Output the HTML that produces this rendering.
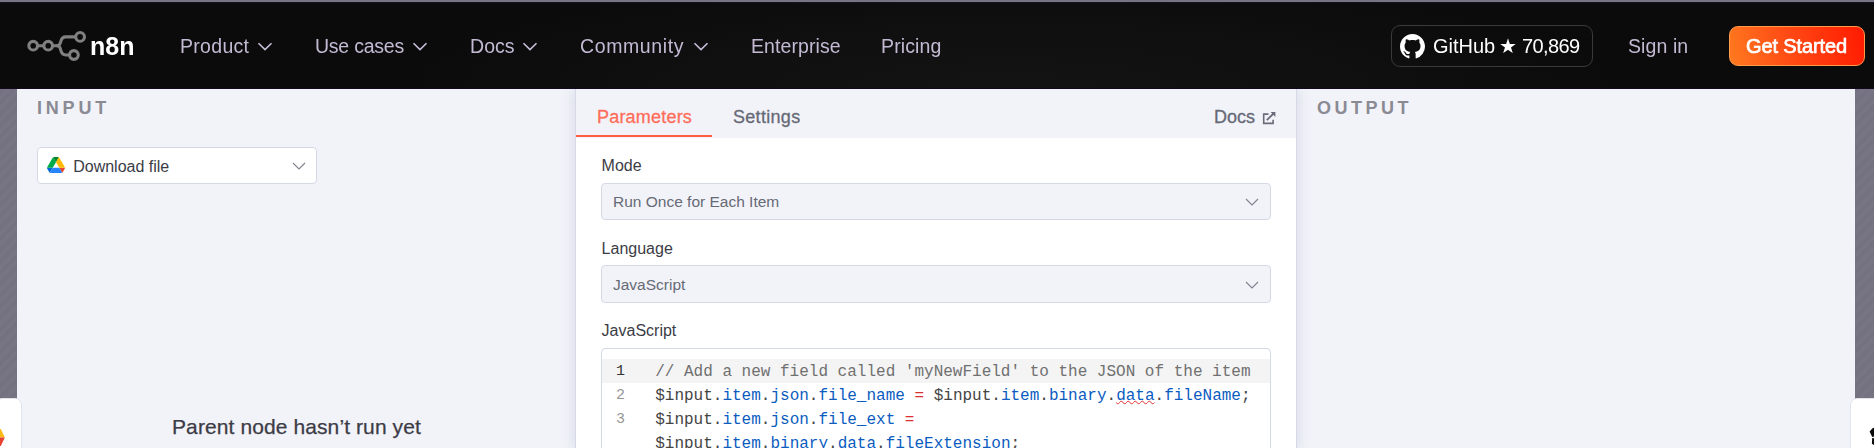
<!DOCTYPE html>
<html lang="en">
<head>
<meta charset="utf-8">
<title>n8n</title>
<style>
*{box-sizing:border-box;margin:0;padding:0}
html,body{width:1874px;height:448px;overflow:hidden;background:#f2f3f9;font-family:"Liberation Sans",sans-serif}
.abs{position:absolute}
#topstrip{left:0;top:0;width:1874px;height:2px;background:#777485}
#nav{left:0;top:2px;width:1874px;height:87px;background:#0b0b0b radial-gradient(ellipse 620px 110px at 54% 100%,#131313 0%,#101010 50%,#0b0b0b 100%);border-top:1px solid #18121f;border-bottom:1px solid #120a1c}
.nl{will-change:transform;position:absolute;top:33px;height:26px;line-height:26px;font-size:19.500px;color:#c3b9d3;white-space:nowrap}
.chev{position:absolute;top:40px}
#lstrip{left:0;top:89px;width:17px;height:359px;background:#747281 repeating-linear-gradient(135deg,rgba(255,255,255,0) 0 4px,rgba(255,255,255,.022) 4px 8px)}
#rstrip{left:1855px;top:89px;width:19px;height:359px;background:#747281 repeating-linear-gradient(135deg,rgba(255,255,255,0) 0 4px,rgba(255,255,255,.022) 4px 8px)}
.ptitle{position:absolute;top:98px;font-size:18px;font-weight:bold;letter-spacing:3.8px;color:#8a8a93;line-height:20px}
#center{left:576px;top:89px;width:720px;height:359px;background:#fff;box-shadow:0 0 0 1px #d6dae6,0 0 14px rgba(90,110,150,.24);clip-path:inset(0 -24px 0 -24px)}
#tabs{left:0;top:0;width:720px;height:49px;background:#f2f3f9}
.lbl{position:absolute;font-size:16px;color:#3c3c46;line-height:18px}
.sel{position:absolute;left:25px;width:670px;height:37px;background:#f2f3f9;border:1px solid #d5d9e6;border-radius:4px;font-size:15.500px;color:#666a75;line-height:35px;padding-left:11px}
#ed b{font-weight:normal;color:#0b5cbf}
#ed i{font-style:normal;color:#d92f2f}
#ed .sq{text-decoration:underline wavy #e03030 1px;text-underline-offset:0px}
</style>
</head>
<body>
<div class="abs" id="nav"></div>
<div class="abs" id="topstrip"></div>

<!-- logo -->
<svg class="abs" style="left:24px;top:26px" width="68" height="40" viewBox="24 26 68 40" fill="none" stroke="#808080" stroke-width="3.100" stroke-linecap="round" stroke-linejoin="round">
<circle cx="33.200" cy="45.700" r="4.350"/>
<circle cx="48.200" cy="45.700" r="4.350"/>
<circle cx="80.100" cy="36.900" r="4.350"/>
<circle cx="73.900" cy="55" r="4.350"/>
<path d="M37.700 45.700H43.700M52.700 45.700H57.500"/>
<path d="M57.500 45.700C59.500 45.700 60.300 43.800 60.800 41.500C61.400 38.800 62.800 36.900 65.800 36.900H75.600"/>
<path d="M57.500 45.700C59.500 45.700 60.300 47.800 60.800 50.300C61.400 53 62.800 55 65.800 55H69.400"/>
</svg>
<div class="abs" style="will-change:transform;left:90.400px;top:31px;font-size:25px;font-weight:bold;color:#fff;line-height:30px;letter-spacing:0px">n8n</div>

<div class="nl" id="n1" style="left:180.300px;letter-spacing:0.300px">Product</div>
<div class="nl" id="n2" style="left:315.400px;letter-spacing:-0.230px">Use cases</div>
<div class="nl" id="n3" style="left:470px;letter-spacing:0.060px">Docs</div>
<div class="nl" id="n4" style="left:580.300px;letter-spacing:0.610px">Community</div>
<div class="nl" id="n5" style="left:751px;letter-spacing:0.080px">Enterprise</div>
<div class="nl" id="n6" style="left:881.200px;letter-spacing:0.120px">Pricing</div>
<svg class="chev" style="left:257px" width="16" height="12" viewBox="0 0 16 12" fill="none" stroke="#c7bdd8" stroke-width="1.6"><path d="M1.500 3.300L8 9.600L14.500 3.300"/></svg>
<svg class="chev" style="left:412px" width="16" height="12" viewBox="0 0 16 12" fill="none" stroke="#c7bdd8" stroke-width="1.6"><path d="M1.500 3.300L8 9.600L14.500 3.300"/></svg>
<svg class="chev" style="left:522px" width="16" height="12" viewBox="0 0 16 12" fill="none" stroke="#c7bdd8" stroke-width="1.6"><path d="M1.500 3.300L8 9.600L14.500 3.300"/></svg>
<svg class="chev" style="left:693px" width="16" height="12" viewBox="0 0 16 12" fill="none" stroke="#c7bdd8" stroke-width="1.6"><path d="M1.500 3.300L8 9.600L14.500 3.300"/></svg>

<!-- github -->
<div class="abs" style="left:1391px;top:25px;width:202px;height:42px;border:1px solid #3a3a3a;border-radius:9px"></div>
<svg class="abs" style="left:1399.700px;top:33.700px" width="25" height="25" viewBox="0 0 16 16" fill="#fff"><path d="M8 0C3.580 0 0 3.580 0 8c0 3.540 2.290 6.530 5.470 7.590.4.070.55-.17.550-.38 0-.19-.01-.82-.01-1.490-2.010.37-2.530-.49-2.690-.94-.09-.23-.48-.94-.82-1.130-.28-.15-.68-.52-.01-.53.630-.01 1.080.58 1.230.82.720 1.210 1.870.87 2.330.66.070-.52.280-.87.510-1.070-1.780-.2-3.640-.89-3.640-3.950 0-.87.310-1.590.82-2.150-.08-.2-.36-1.020.08-2.120 0 0 .67-.21 2.200.82.640-.18 1.320-.27 2-.27s1.360.09 2 .27c1.530-1.040 2.200-.82 2.200-.82.440 1.100.16 1.920.08 2.120.51.560.82 1.270.82 2.150 0 3.070-1.870 3.750-3.650 3.950.29.250.54.730.54 1.480 0 1.070-.01 1.930-.01 2.200 0 .21.150.46.550.38A8.013 8.013 0 0016 8c0-4.420-3.580-8-8-8z"/></svg>
<div class="abs" id="gh" style="will-change:transform;left:1432.500px;top:33px;font-size:20px;color:#fff;line-height:26px;white-space:nowrap">GitHub</div>
<div class="abs" id="star" style="will-change:transform;left:1499.300px;top:33px;font-family:'DejaVu Sans',sans-serif;font-size:20px;color:#fff;line-height:26px">★</div>
<div class="abs" id="ghn" style="will-change:transform;left:1522px;top:33px;font-size:20px;color:#fff;line-height:26px;white-space:nowrap;letter-spacing:-.6px">70,869</div>
<div class="nl" id="n7" style="left:1628px;letter-spacing:0.090px">Sign in</div>
<div class="abs" style="left:1729px;top:26px;width:136px;height:40px;border-radius:9px;background:linear-gradient(75deg,#ff7a1f 0%,#ff4a14 45%,#ff1a00 100%);border:1px solid #ff9a4a"></div>
<div class="abs" id="gs" style="will-change:transform;left:1746.200px;top:33px;font-size:20px;letter-spacing:-.12px;-webkit-text-stroke:.7px #fff;color:#fff;line-height:26px;white-space:nowrap">Get Started</div>

<!-- side strips -->
<div class="abs" id="lstrip"></div>
<div class="abs" id="rstrip"></div>

<!-- INPUT panel -->
<div class="ptitle" id="ti" style="left:37px">INPUT</div>
<div class="abs" style="left:37px;top:147px;width:280px;height:37px;background:#fff;border:1px solid #d5d9e6;border-radius:4px"></div>
<svg class="abs" style="left:47px;top:157px" width="18" height="16" viewBox="0 0 87.3 78"><path d="m6.600 66.850 3.850 6.650c.8 1.400 1.950 2.500 3.300 3.300l13.750-23.800h-27.500c0 1.550.4 3.100 1.200 4.500z" fill="#0066da"/><path d="m43.650 25-13.750-23.800c-1.350.8-2.500 1.900-3.300 3.300l-25.400 44a9.060 9.060 0 0 0 -1.200 4.500h27.500z" fill="#00ac47"/><path d="m73.550 76.800c1.350-.8 2.500-1.900 3.300-3.300l1.600-2.750 7.650-13.250c.8-1.400 1.200-2.950 1.200-4.500h-27.502l5.852 11.500z" fill="#ea4335"/><path d="m43.650 25 13.750-23.800c-1.350-.8-2.900-1.200-4.500-1.200h-18.500c-1.600 0-3.150.45-4.500 1.200z" fill="#00832d"/><path d="m59.800 53h-32.300l-13.750 23.800c1.350.8 2.900 1.200 4.500 1.200h50.800c1.600 0 3.150-.45 4.500-1.200z" fill="#2684fc"/><path d="m73.400 26.500-12.700-22c-.8-1.400-1.950-2.500-3.300-3.300l-13.750 23.800 16.150 28h27.450c0-1.550-.4-3.100-1.200-4.500z" fill="#ffba00"/></svg>
<div class="abs" id="dl" style="left:73.200px;top:157px;font-size:16px;color:#3c3c46;line-height:20px;white-space:nowrap">Download file</div>
<svg class="abs" style="left:290.700px;top:160px" width="16" height="12" viewBox="0 0 16 12" fill="none" stroke="#80838f" stroke-width="1.150"><path d="M2 3L8 9L14 3"/></svg>
<div class="abs" id="pn" style="-webkit-text-stroke:.25px #3c3c46;left:172px;top:415px;font-size:21px;letter-spacing:.1px;color:#3c3c46;line-height:24px;white-space:nowrap">Parent node hasn’t run yet</div>

<!-- OUTPUT -->
<div class="ptitle" id="to" style="left:1317px;letter-spacing:3.500px">OUTPUT</div>

<!-- center -->
<div class="abs" id="center">
  <div class="abs" id="tabs"></div>
  <div class="abs" style="left:0;top:46px;width:136px;height:2px;background:#ff5c44"></div>
  <div class="abs" id="t1" style="-webkit-text-stroke:.3px #ff6d5a;left:21px;top:17px;font-size:18px;color:#ff6d5a;line-height:22px;letter-spacing:.2px">Parameters</div>
  <div class="abs" id="t2" style="-webkit-text-stroke:.3px #666976;left:157px;top:17px;font-size:18px;color:#666976;line-height:22px;letter-spacing:.3px">Settings</div>
  <div class="abs" id="t3" style="-webkit-text-stroke:.3px #666976;left:638px;top:17px;font-size:18px;color:#666976;line-height:22px">Docs</div>
  <svg class="abs" style="left:685px;top:21px" width="16" height="16" viewBox="0 0 16 16" fill="none" stroke="#686b78" stroke-width="1.600"><path d="M7.500 4.100H2.700V13.400H12.100V9.800"/><path d="M5.800 10.200L12.500 3.500" stroke-width="1.800"/><path d="M14.400 2.100H9.600L14.400 6.900z" fill="#686b78" stroke="none"/></svg>

  <div class="lbl" id="l1" style="left:25.600px;top:68px">Mode</div>
  <div class="sel" id="s1" style="top:94px">Run Once for Each Item</div>
  <svg class="abs" style="left:667.700px;top:107px" width="16" height="12" viewBox="0 0 16 12" fill="none" stroke="#80838f" stroke-width="1.150"><path d="M2 3L8 9L14 3"/></svg>
  <div class="lbl" id="l2" style="left:25.600px;top:151px">Language</div>
  <div class="sel" id="s2" style="top:176px;height:38px;line-height:37px">JavaScript</div>
  <svg class="abs" style="left:667.700px;top:189.500px" width="16" height="12" viewBox="0 0 16 12" fill="none" stroke="#80838f" stroke-width="1.150"><path d="M2 3L8 9L14 3"/></svg>
  <div class="lbl" id="l3" style="left:25.600px;top:233px">JavaScript</div>

  <div class="abs" id="ed" style="left:25px;top:259px;width:670px;height:120px;border:1px solid #d5d9e6;border-radius:4px;background:#fff;overflow:hidden;font-family:'Liberation Mono',monospace;font-size:16px;line-height:24px;white-space:pre">
    <div class="abs" style="left:0;top:10px;width:668px;height:24px;background:#f4f4f4"></div>
    <div class="abs" style="left:14px;top:11px;color:#333;font-size:15px">1</div>
    <div class="abs" style="left:14px;top:35px;color:#979797;font-size:15px">2</div>
    <div class="abs" style="left:14px;top:59px;color:#979797;font-size:15px">3</div>
    <div class="abs cl" id="c1" style="left:53.200px;top:11px;color:#707070">// Add a new field called 'myNewField' to the JSON of the item</div>
    <div class="abs cl" id="c2" style="left:53.200px;top:35px;color:#444">$input.<b>item</b>.<b>json</b>.<b>file_name</b> <i>=</i> $input.<b>item</b>.<b>binary</b>.<b class="sq">data</b>.<b>fileName</b>;</div>
    <div class="abs cl" id="c3" style="left:53.200px;top:59px;color:#444">$input.<b>item</b>.<b>json</b>.<b>file_ext</b> <i>=</i></div>
    <div class="abs cl" id="c4" style="left:53.200px;top:83px;color:#444">$input.<b>item</b>.<b>binary</b>.<b>data</b>.<b>fileExtension</b>;</div>
  </div>
</div>

<!-- bottom corners -->
<div class="abs" style="left:-5px;top:398px;width:27px;height:60px;background:#fff;border:1px solid #e1e4ee;border-radius:7px"></div>
<svg class="abs" style="left:0;top:428px" width="6" height="20" viewBox="0 428 6 20"><path d="M0 429H0.800L4.800 437.500H0z" fill="#fdb913"/><path d="M0 437.500H4.800L0.800 446H0z" fill="#e8412f"/></svg>
<div class="abs" style="left:1850px;top:398px;width:31px;height:60px;background:#fff;border:1px solid #e1e4ee;border-radius:7px"></div>
<svg class="abs" style="left:1868px;top:426px" width="6" height="22" viewBox="1868 426 6 22"><path d="M1869.600 431.500L1872.500 428.300L1874 427.800V436.500L1872.300 436.900L1871 434.500z" fill="#0a0a0a"/><path d="M1872.200 438L1874 438.200V445L1871.900 443.800z" fill="#0a0a0a"/></svg>
</body>
</html>
